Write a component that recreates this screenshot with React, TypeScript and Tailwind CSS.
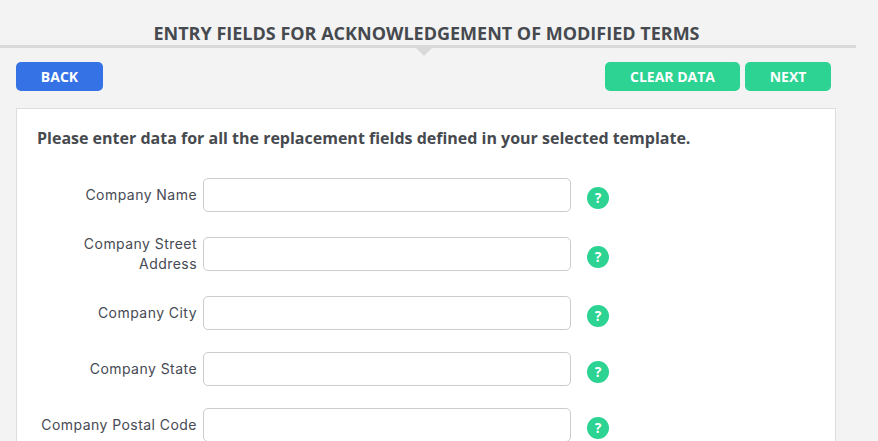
const fields = [
  "Company Name",
  "Company Street Address",
  "Company City",
  "Company State",
  "Company Postal Code",
];

function FieldRow({ label }: { label: string }) {
  return (
    <div className="flex items-center">
      <label className="w-[169px] shrink-0 pr-[6px] text-right text-[14px] leading-[20px] tracking-[0.45px] text-[#464a53] font-['Inter',sans-serif]">
        {label}
      </label>
      <input
        type="text"
        className="h-[34px] w-[368px] shrink-0 rounded-[5px] border border-[#cccccc] bg-white"
      />
      <span className="mt-[5px] ml-[16px] flex h-[22px] w-[22px] items-center justify-center rounded-full bg-[#2cd392] text-[14px] font-bold text-white">
        ?
      </span>
    </div>
  );
}

export default function App() {
  return (
    <div className="h-[441px] w-[878px] overflow-hidden bg-[#f3f3f3] font-['Open_Sans',sans-serif]">
      <div className="relative h-[48px] w-[856px] border-b-[3px] border-[#d9d9d9] pt-[21px] pr-[3px] text-center">
        <h1 className="text-[18px] leading-[24px] font-bold text-[#464a4f] uppercase">
          Entry fields for acknowledgement of modified terms
        </h1>
        <div className="absolute top-[48px] left-[416px] h-0 w-0 border-x-[8px] border-t-[8px] border-x-transparent border-t-[#d9d9d9]" />
      </div>
      <div className="mt-[14px] ml-[16px] flex w-[815px] justify-between">
        <button className="h-[29px] w-[87px] rounded-[5px] bg-[#3572e6] text-[14px] font-bold text-white">
          BACK
        </button>
        <div className="flex gap-[5px]">
          <button className="h-[29px] w-[135px] rounded-[5px] bg-[#2cd392] text-[14px] font-bold text-white">
            CLEAR DATA
          </button>
          <button className="h-[29px] w-[86px] rounded-[5px] bg-[#2cd392] text-[14px] font-bold text-white">
            NEXT
          </button>
        </div>
      </div>
      <div className="mt-[17px] ml-[16px] w-[820px] border border-[#dddddd] bg-white pt-[18px] pb-[40px] pl-[20px]">
        <p className="text-[16px] leading-[22px] font-bold text-[#464a4f]">
          Please enter data for all the replacement fields defined in your selected template.
        </p>
        <div className="mt-[29px] -ml-[3px] flex flex-col gap-[22px]">
          {fields.map((f) => (
            <FieldRow key={f} label={f} />
          ))}
        </div>
      </div>
    </div>
  );
}
